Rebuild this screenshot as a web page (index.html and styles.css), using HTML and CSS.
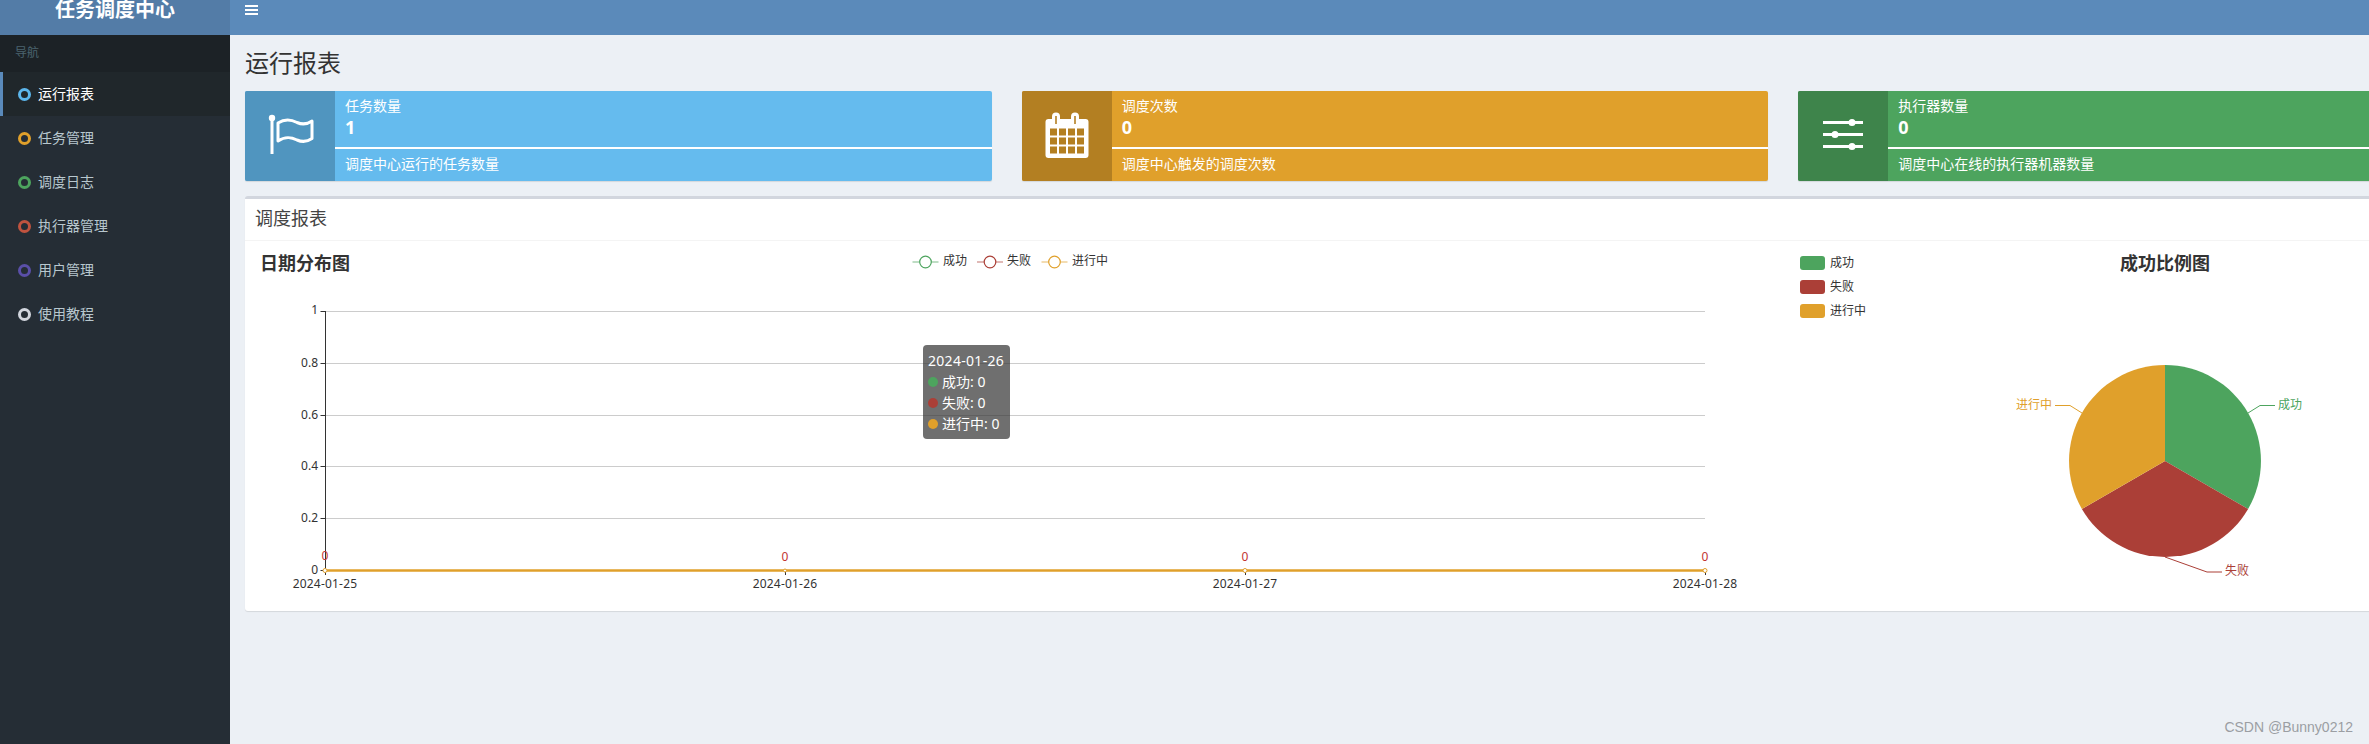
FILE: index.html
```html
<!DOCTYPE html>
<html lang="zh-CN">
<head>
  <meta charset="UTF-8">
  <title>任务调度中心</title>
  <link rel="stylesheet" href="styles.css">
</head>
<body>
  <div class="wrapper">
    <aside class="sidebar">
      <div class="logo">任务调度中心</div>
      <div class="nav-header">导航</div>
      <ul class="nav-menu">
        <li class="nav-item active"><span class="dot dot-blue"></span>运行报表</li>
        <li class="nav-item"><span class="dot dot-orange"></span>任务管理</li>
        <li class="nav-item"><span class="dot dot-green"></span>调度日志</li>
        <li class="nav-item"><span class="dot dot-red"></span>执行器管理</li>
        <li class="nav-item"><span class="dot dot-purple"></span>用户管理</li>
        <li class="nav-item"><span class="dot dot-gray"></span>使用教程</li>
      </ul>
    </aside>

    <div class="main">
      <div class="topbar">
        <button class="menu-toggle"><span></span><span></span><span></span></button>
      </div>

      <div class="content">
        <h1 class="page-title">运行报表</h1>

        <div class="cards">
          <div class="card card-blue">
            <div class="card-icon">
              <svg width="90" height="90" viewBox="0 0 90 90">
                <!-- flag -->
                <circle cx="27" cy="27" r="3.2" fill="#fff"/>
                <path d="M27 28V63" stroke="#fff" stroke-width="3" fill="none"/>
                <path d="M33 32C41 27 47 29 52 31.500C58 34 62 33.500 67 30V47.500C62 51 58 51.500 52 49C47 46.500 41 44.500 33 50Z" stroke="#fff" stroke-width="3" fill="none" stroke-linejoin="round"/>
              </svg>
            </div>
            <div class="card-body">
              <span class="card-label">任务数量</span>
              <span class="card-value">1</span>
              <div class="card-line"></div>
              <span class="card-desc">调度中心运行的任务数量</span>
            </div>
          </div>

          <div class="card card-orange">
            <div class="card-icon">
              <svg width="90" height="90" viewBox="0 0 90 90">
                <!-- calendar -->
                <rect x="23.500" y="28" width="43" height="39" rx="3" fill="#fff"/>
                <path d="M30 31V25.500a4 4 0 0 1 8 0V31Z" fill="#fff"/>
                <path d="M49 31V25.500a4 4 0 0 1 8 0V31Z" fill="#fff"/>
                <path d="M34 33V25M53 33V25" stroke="#b37f22" stroke-width="1.600" fill="none"/>
                <g fill="#b37f22">
                  <rect x="28" y="37.500" width="7" height="7"/><rect x="37" y="37.500" width="7" height="7"/><rect x="46" y="37.500" width="7" height="7"/><rect x="55" y="37.500" width="7" height="7"/>
                  <rect x="28" y="46.500" width="7" height="7"/><rect x="37" y="46.500" width="7" height="7"/><rect x="46" y="46.500" width="7" height="7"/><rect x="55" y="46.500" width="7" height="7"/>
                  <rect x="28" y="55.500" width="7" height="7"/><rect x="37" y="55.500" width="7" height="7"/><rect x="46" y="55.500" width="7" height="7"/><rect x="55" y="55.500" width="7" height="7"/>
                </g>
              </svg>
            </div>
            <div class="card-body">
              <span class="card-label">调度次数</span>
              <span class="card-value">0</span>
              <div class="card-line"></div>
              <span class="card-desc">调度中心触发的调度次数</span>
            </div>
          </div>

          <div class="card card-green">
            <div class="card-icon">
              <svg width="90" height="90" viewBox="0 0 90 90">
                <!-- sliders -->
                <g fill="#fff">
                  <rect x="25" y="30" width="40" height="3"/>
                  <rect x="25" y="42" width="40" height="3"/>
                  <rect x="25" y="54" width="40" height="3"/>
                  <circle cx="54" cy="31.500" r="3.500"/>
                  <circle cx="37" cy="43.500" r="3.500"/>
                  <circle cx="54" cy="55.500" r="3.500"/>
                </g>
              </svg>
            </div>
            <div class="card-body">
              <span class="card-label">执行器数量</span>
              <span class="card-value">0</span>
              <div class="card-line"></div>
              <span class="card-desc">调度中心在线的执行器机器数量</span>
            </div>
          </div>
        </div>

        <div class="box">
          <div class="box-header">调度报表</div>
          <div class="box-body">
            <div class="chart chart-line">
              <svg width="1530" height="370" viewBox="255 241 1530 370">
                <text class="chart-title" x="260" y="270">日期分布图</text>

                <!-- legend -->
                <g fill="none" stroke-width="1.200">
                  <path d="M912.500 262H938.500" stroke="#4da45e" opacity="0.6"/>
                  <circle cx="925.500" cy="262" r="5.800" fill="#fff" stroke="#4da45e"/>
                  <path d="M977 262H1003" stroke="#ab3f37" opacity="0.6"/>
                  <circle cx="990" cy="262" r="5.800" fill="#fff" stroke="#ab3f37"/>
                  <path d="M1041.500 262H1067.500" stroke="#e0a02b" opacity="0.6"/>
                  <circle cx="1054.500" cy="262" r="5.800" fill="#fff" stroke="#e0a02b"/>
                </g>
                <text class="axis-text" x="943" y="265">成功</text>
                <text class="axis-text" x="1007" y="265">失败</text>
                <text class="axis-text" x="1072" y="265">进行中</text>

                <!-- grid -->
                <path d="M325.500 311.500H1705M325.500 363.500H1705M325.500 415.500H1705M325.500 466.500H1705M325.500 518.500H1705" stroke="#ccc" fill="none"/>
                <path d="M325.500 311V575M320.500 311.500H325.500M320.500 363.500H325.500M320.500 415.500H325.500M320.500 466.500H325.500M320.500 518.500H325.500M320.500 570.500H325.500M785.500 570V575M1245.500 570V575M1705.500 570V575" stroke="#333" fill="none"/>

                <g class="axis-text" text-anchor="end">
                  <text x="318" y="314">1</text>
                  <text x="318" y="367">0.8</text>
                  <text x="318" y="419">0.6</text>
                  <text x="318" y="470">0.4</text>
                  <text x="318" y="522">0.2</text>
                  <text x="318" y="574">0</text>
                </g>
                <g class="axis-text date-text" text-anchor="middle">
                  <text x="325" y="588">2024-01-25</text>
                  <text x="785" y="588">2024-01-26</text>
                  <text x="1245" y="588">2024-01-27</text>
                  <text x="1705" y="588">2024-01-28</text>
                </g>
                <g class="zero-label" text-anchor="middle">
                  <text x="325" y="560">0</text>
                  <text x="785" y="561">0</text>
                  <text x="1245" y="561">0</text>
                  <text x="1705" y="561">0</text>
                </g>

                <!-- series all zero, the last one is on top -->
                <path d="M325 570.500H1705" stroke="#e0a02b" stroke-width="2.500" fill="none"/>
                <g fill="#fff" stroke="#e0a02b">
                  <circle cx="325" cy="570.500" r="2"/>
                  <circle cx="785" cy="570.500" r="1.500"/>
                  <circle cx="1245" cy="570.500" r="2"/>
                  <circle cx="1705" cy="570.500" r="2"/>
                </g>
              </svg>

              <div class="tooltip">
                <div class="tip-date">2024-01-26</div>
                <div><span class="tip-dot tip-green"></span>成功: 0</div>
                <div><span class="tip-dot tip-red"></span>失败: 0</div>
                <div><span class="tip-dot tip-orange"></span>进行中: 0</div>
              </div>
            </div>

            <div class="chart chart-pie">
              <svg width="585" height="370" viewBox="1785 241 585 370">
                <text class="chart-title" x="2165" y="270" text-anchor="middle">成功比例图</text>

                <rect x="1800" y="256" width="25" height="14" rx="3" fill="#4da45e"/>
                <rect x="1800" y="280" width="25" height="14" rx="3" fill="#ab3f37"/>
                <rect x="1800" y="304" width="25" height="14" rx="3" fill="#e0a02b"/>
                <text class="axis-text" x="1830" y="267">成功</text>
                <text class="axis-text" x="1830" y="291">失败</text>
                <text class="axis-text" x="1830" y="315">进行中</text>

                <path d="M2165 461V365A96 96 0 0 1 2248.100 509Z" fill="#4da45e"/>
                <path d="M2165 461L2248.100 509A96 96 0 0 1 2081.900 509Z" fill="#ab3f37"/>
                <path d="M2165 461L2081.900 509A96 96 0 0 1 2165 365Z" fill="#e0a02b"/>

                <path d="M2248 413L2260 405.500H2275" stroke="#4da45e" fill="none"/>
                <path d="M2165 557L2207 572H2222" stroke="#ab3f37" fill="none"/>
                <path d="M2082 413L2070 405.500H2055" stroke="#e0a02b" fill="none"/>
                <text class="pie-label" x="2278" y="409" fill="#4da45e">成功</text>
                <text class="pie-label" x="2225" y="575" fill="#ab3f37">失败</text>
                <text class="pie-label" x="2016" y="409" fill="#e0a02b">进行中</text>
              </svg>
            </div>
          </div>
        </div>
      </div>
    </div>
  </div>

  <div class="watermark">CSDN @Bunny0212</div>
</body>
</html>
```

FILE: styles.css
```css
* {
  box-sizing: border-box;
}
html, body {
  height: 100%;
}
body {
  margin: 0;
  overflow: hidden;
  font-family: "Noto Sans", "Noto Sans CJK SC", sans-serif;
  font-size: 14px;
  color: #333;
  background-color: #ecf0f5;
}
.wrapper {
  display: flex;
  height: 744px;
}

/* sidebar */
.sidebar {
  flex: 0 0 230px;
  background-color: #252d35;
}
.logo {
  height: 35px;
  font-size: 20px;
  font-weight: bold;
  line-height: 20px;
  text-align: center;
  color: #fff;
  background-color: #537ca7;
}
.nav-header {
  height: 37px;
  padding-left: 15px;
  font-size: 12px;
  line-height: 35px;
  color: #4b646f;
  background-color: #1c2226;
}
.nav-menu {
  margin: 0;
  padding: 0;
  list-style: none;
}
.nav-item {
  display: flex;
  align-items: center;
  gap: 7px;
  height: 44px;
  padding-left: 18px;
  color: #b8c7ce;
  line-height: 1;
}
.nav-item.active {
  padding-left: 15px;
  border-left: 3px solid #5a8abb;
  color: #fff;
  background-color: #20272b;
}
.dot {
  width: 13px;
  height: 13px;
  border: 3px solid;
  border-radius: 50%;
}
.dot-blue { border-color: #5cb6ec; }
.dot-orange { border-color: #e0a02b; }
.dot-green { border-color: #4da45e; }
.dot-red { border-color: #c0533f; }
.dot-purple { border-color: #5a4fa8; }
.dot-gray { border-color: #d2d6de; }

/* top bar */
.main {
  flex: 1;
  min-width: 0;
}
.topbar {
  height: 35px;
  padding-left: 15px;
  background-color: #5b8aba;
}
.menu-toggle {
  display: flex;
  flex-direction: column;
  gap: 2px;
  width: 13px;
  padding: 5px 0 0;
  border: none;
  background: none;
}
.menu-toggle span {
  width: 13px;
  height: 2px;
  background-color: #fff;
}

.content {
  width: 2330px;
  padding: 15px;
}
.page-title {
  margin: 0 0 15px;
  font-size: 24px;
  font-weight: 400;
  line-height: 26px;
}

/* cards */
.cards {
  display: grid;
  grid-template-columns: repeat(3, 1fr);
  gap: 30px;
  margin-bottom: 15px;
}
.card {
  display: flex;
  height: 90px;
  border-radius: 2px;
  color: #fff;
  box-shadow: 0 1px 1px rgba(0, 0, 0, 0.1);
  overflow: hidden;
}
.card-icon {
  flex: 0 0 90px;
}
.card-icon svg {
  display: block;
}
.card-body {
  display: flex;
  flex-direction: column;
  flex: 1;
  padding: 5px 10px 0;
}
.card-label {
  height: 20px;
  line-height: 20px;
}
.card-value {
  height: 31px;
  font-size: 18px;
  font-weight: bold;
  line-height: 22px;
}
.card-line {
  flex: none;
  height: 2px;
  margin: 0 -10px 5px;
  background-color: #fff;
}
.card-desc {
  line-height: 20px;
}
.card-blue { background-color: #65bbee; }
.card-blue .card-icon { background-color: #5095bf; }
.card-orange { background-color: #e0a02b; }
.card-orange .card-icon { background-color: #b37f22; }
.card-green { background-color: #4da45e; }
.card-green .card-icon { background-color: #3e844b; }

/* report box */
.box {
  height: 415px;
  border-top: 3px solid #d2d6de;
  border-radius: 3px;
  background-color: #fff;
  box-shadow: 0 1px 1px rgba(0, 0, 0, 0.1);
}
.box-header {
  height: 42px;
  padding-left: 10px;
  font-size: 18px;
  line-height: 39px;
  color: #444;
  border-bottom: 1px solid #f4f4f4;
}
.box-body {
  display: flex;
  padding-left: 10px;
}
.chart {
  position: relative;
}
.chart svg {
  display: block;
}
.chart-title {
  font-size: 18px;
  font-weight: bold;
  fill: #333;
}
.axis-text {
  font-size: 12px;
  fill: #333;
}
.date-text {
  letter-spacing: 0.2px;
}
.zero-label {
  font-size: 12px;
  fill: #c23531;
}
.pie-label {
  font-size: 12px;
}

/* tooltip sits over the chart */
.tooltip {
  position: absolute;
  left: 668px;
  top: 104px;
  width: 87px;
  height: 94px;
  padding: 5px;
  border-radius: 4px;
  font-size: 14px;
  line-height: 21px;
  white-space: nowrap;
  color: #fff;
  background-color: rgba(50, 50, 50, 0.7);
}
.tip-date {
  letter-spacing: 0.3px;
}
.tip-dot {
  display: inline-block;
  width: 10px;
  height: 10px;
  margin-right: 4px;
  border-radius: 50%;
}
.tip-green { background-color: #4da45e; }
.tip-red { background-color: #ab3f37; }
.tip-orange { background-color: #e0a02b; }

.watermark {
  position: absolute;
  right: 16px;
  top: 718px;
  font-family: "Liberation Sans", sans-serif;
  font-size: 14px;
  line-height: 18px;
  color: #9b9ea3;
}
```
